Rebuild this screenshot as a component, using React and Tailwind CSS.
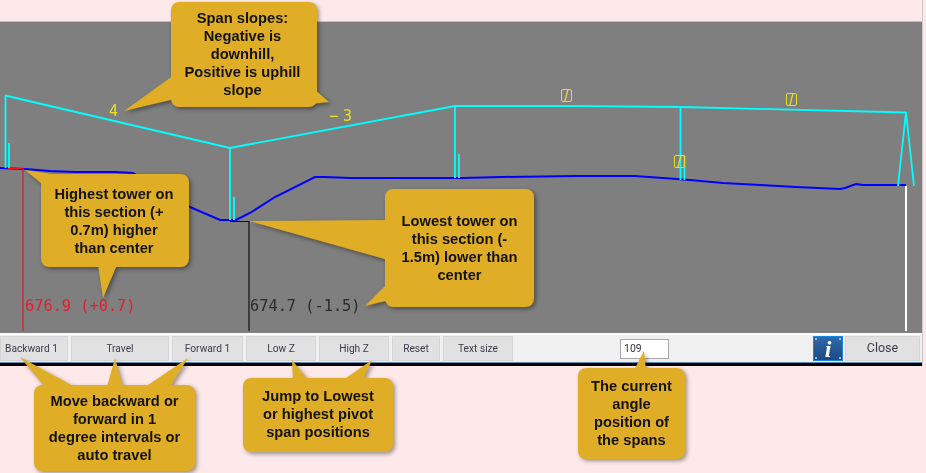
export default function App() {
  const fill = "#dfae26";
  const btn = "h-[25px] shrink-0 flex items-center justify-center bg-[#e1e1e1] border border-[#d4d4d4] text-[#3c3c4c] text-[10.2px]";
  const tip = "absolute flex items-center justify-center text-center text-[14.7px] leading-[18px] font-bold text-[#14120a] [font-family:'Liberation_Sans',Arial,sans-serif]";
  const zero = "absolute w-[11px] h-[13px] flex items-center justify-center border border-[#e8e020] rounded-[2px] text-[16px] leading-none font-light text-[#e8e020] [font-family:'Liberation_Sans',sans-serif]";
  return (
    <div className="relative w-[926px] h-[473px] overflow-hidden bg-[#fee9ea] blur-[0.35px] [font-family:'Roboto',sans-serif]">
      <div className="w-[923px] border-r border-[#cfc8c8]">
        <div className="h-[21px] border-b border-[#c8bcbc] box-content" />
        <div className="relative h-[311px] bg-[#7f7f7f]">
          <svg className="absolute inset-0" width="922" height="311" viewBox="0 22 922 311" fill="none">
            <g stroke="#0000ff" strokeWidth="2">
              <polyline points="0,168 25,169 50,171 75,172 115,172 133,173 190,207 220,220 236,220 250,213 275,197 315,177 325,177 350,178 400,178 463,178 501,177 576,176 635,176 663,178 690,180 723,183 760,185 796,187 840,189 845,188 856,184 863,185 906,185" />
            </g>
            <g stroke="#f0102a" strokeWidth="1.2">
              <polyline points="8,168.5 23,168.5 23,331" />
            </g>
            <g stroke="#111111" strokeWidth="1.2">
              <polyline points="230,221.5 249,221.5 249,331" />
            </g>
            <line x1="906" y1="186" x2="906" y2="331" stroke="#ffffff" strokeWidth="2" />
            <g stroke="#00ffff" strokeWidth="1.8">
              <polyline points="5,95.5 230,148 455,106 568,106 680,107 906,112.5" />
              <path d="M5.5 95V168M9 143V168M230 148V220M234 197V220M455 106V178M459 154V178M680.5 107V180M684.5 155V180M906 112L898 186M906 112L914 186" />
            </g>
          </svg>
          <span className="absolute left-[109px] top-[79px] text-[15px] leading-[20px] text-[#e8e020] [font-family:'DejaVu_Sans_Mono',monospace]">4</span>
          <span className="absolute left-[329px] top-[84px] text-[15px] leading-[20px] tracking-[5px] text-[#e8e020] [font-family:'DejaVu_Sans_Mono',monospace]">−3</span>
          <span className={`${zero} left-[561px] top-[67px]`}>/</span>
          <span className={`${zero} left-[786px] top-[71px]`}>/</span>
          <span className={`${zero} left-[674px] top-[133px]`}>/</span>
          <span className="absolute left-[25px] top-[274px] text-[15.3px] leading-[20px] whitespace-pre text-[#e02030] [font-family:'DejaVu_Sans_Mono',monospace]">676.9 (+0.7)</span>
          <span className="absolute left-[250px] top-[274px] text-[15.3px] leading-[20px] whitespace-pre text-[#2a2a2a] [font-family:'DejaVu_Sans_Mono',monospace]">674.7 (-1.5)</span>
        </div>
        <div className="h-[33px] bg-[#f0f0f0] border-t-2 border-white flex flex-col">
          <div className="flex-1 flex items-center gap-[3px]">
            <div className={`${btn} w-[68px] pr-[5px]`}>Backward 1</div>
            <div className={`${btn} w-[98px]`}>Travel</div>
            <div className={`${btn} w-[71px]`}>Forward 1</div>
            <div className={`${btn} w-[70px]`}>Low Z</div>
            <div className={`${btn} w-[70px]`}>High Z</div>
            <div className={`${btn} w-[48px]`}>Reset</div>
            <div className={`${btn} w-[70px]`}>Text size</div>
            <div className="ml-[104px] h-[20px] w-[49px] shrink-0 flex items-center bg-white border border-[#a8a8a8] pl-[3px] text-[10.5px] text-[#303040]">109</div>
            <div className="relative ml-[141px] h-[25px] w-[30px] shrink-0 flex items-center justify-center bg-gradient-to-b from-[#2f6aa6] to-[#1c4a86] border border-[#1a86e0] text-white text-[24px] leading-none font-bold italic [font-family:'Liberation_Serif',serif]">
              i
              <span className="absolute left-[1px] top-[1px] w-[2px] h-[2px] bg-[#9fb4c8]" />
              <span className="absolute right-[1px] top-[1px] w-[2px] h-[2px] bg-[#9fb4c8]" />
              <span className="absolute left-[1px] bottom-[1px] w-[2px] h-[2px] bg-[#9fb4c8]" />
              <span className="absolute right-[1px] bottom-[1px] w-[2px] h-[2px] bg-[#9fb4c8]" />
            </div>
            <div className={`${btn} w-[75px] -ml-[1px] text-[12.5px]`}>Close</div>
          </div>
          <div className="h-[1px] bg-[#5a8ab0]" />
          <div className="h-[3px] bg-black" />
        </div>
      </div>

      <svg className="absolute inset-0 pointer-events-none drop-shadow-[2px_2px_2px_rgba(0,0,0,0.4)]" width="926" height="473" viewBox="0 0 926 473" fill={fill}>
        <rect x="171" y="2" width="146" height="105" rx="8" />
        <polygon points="174,75 124,111 175,99" />
        <polygon points="313,88 329,102 312,104" />
        <rect x="41" y="174" width="148" height="93" rx="8" />
        <polygon points="25,170 42,184 60,175" />
        <polygon points="98,265 103,298 117,265" />
        <rect x="385" y="189" width="149" height="118" rx="8" />
        <polygon points="249,221 386,220 388,260" />
        <polygon points="365,306 388,283 390,300" />
        <rect x="34" y="385" width="161" height="86" rx="8" />
        <polygon points="20,357 45,387 75,387" />
        <polygon points="115,358 107,387 123,387" />
        <polygon points="188,358 145,387 170,387" />
        <rect x="243" y="378" width="150" height="74" rx="8" />
        <polygon points="292,360 293,380 308,380" />
        <polygon points="372,360 343,380 363,380" />
        <rect x="578" y="368" width="107" height="91" rx="8" />
        <polygon points="644,351 634,370 646,370" />
      </svg>

      <div className={`${tip} left-[171px] top-[1px] w-[143px] h-[105px]`}>
        <div>Span slopes:<br />Negative is<br />downhill,<br />Positive is uphill<br />slope</div>
      </div>
      <div className={`${tip} left-[41px] top-[174px] w-[146px] h-[93px]`}>
        <div>Highest tower on<br />this section (+<br />0.7m) higher<br />than center</div>
      </div>
      <div className={`${tip} left-[385px] top-[193px] w-[149px] h-[109px]`}>
        <div>Lowest tower on<br />this section (-<br />1.5m) lower than<br />center</div>
      </div>
      <div className={`${tip} left-[34px] top-[385px] w-[161px] h-[86px]`}>
        <div>Move backward or<br />forward in 1<br />degree intervals or<br />auto travel</div>
      </div>
      <div className={`${tip} left-[243px] top-[378px] w-[150px] h-[72px]`}>
        <div>Jump to Lowest<br />or highest pivot<br />span positions</div>
      </div>
      <div className={`${tip} left-[578px] top-[367px] w-[107px] h-[91px]`}>
        <div>The current<br />angle<br />position of<br />the spans</div>
      </div>
    </div>
  );
}
